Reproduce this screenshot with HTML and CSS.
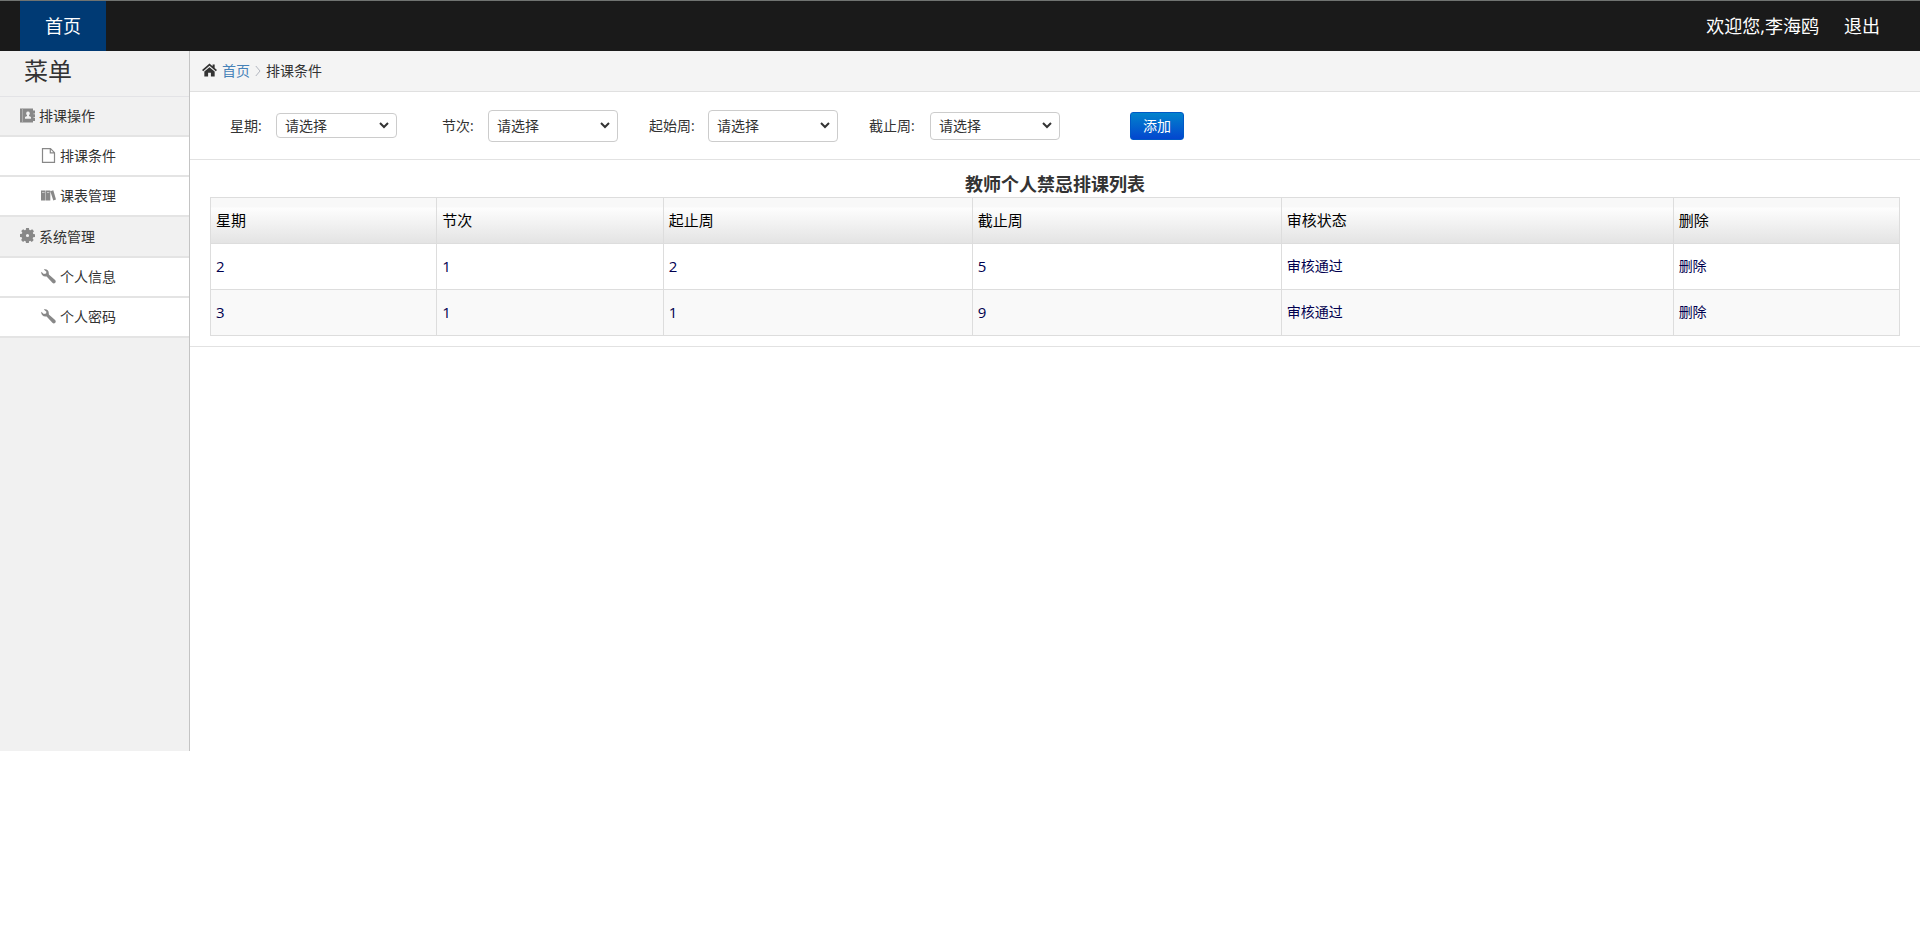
FILE: index.html
```
<!DOCTYPE html>
<html lang="zh-CN">
<head>
<meta charset="utf-8">
<title>排课条件</title>
<link rel="stylesheet" href="styles.css">
</head>
<body>
<svg class="defs" aria-hidden="true">
  <symbol id="wrench" viewBox="0 0 15 15"><path d="M2.800.6C5.400-.3 8 1.600 7.800 4.400c0 .7.100 1.200.6 1.600l5.700 5.100c1.900 1.900-.8 4.600-2.700 2.700L6.300 8.200c-.4-.5-.9-.6-1.600-.6C1.900 7.800-.3 5.400.3 2.700l2.500 2.200 2.300-.5.300-1.600z"/></symbol>
</svg>
<header class="topbar">
  <nav><a class="tab" href="#">首页</a></nav>
  <div class="user"><span>欢迎您,李海鸥</span><a href="#">退出</a></div>
</header>
<div class="layout">
  <aside class="sidebar">
    <h1 class="menu-title">菜单</h1>
    <section class="group">
      <h2 class="group-title"><svg class="icon" viewBox="0 0 15 15"><path fill-rule="evenodd" d="M0 .5h13v2h2v3h-1.500v.8H15v3h-1.500v.8H15v3h-2v1.400H0zM8 3.500a1.900 1.900 0 0 0-1 3.500v1l-2 1v1.800h6V9L9 8V7a1.900 1.900 0 0 0-1-3.500z"/><path d="M2.500.5v14" stroke="#b4b4b4" stroke-width=".8"/></svg>排课操作</h2>
      <a class="item" href="#"><svg class="icon" viewBox="0 0 15 15"><path d="M1.500.7h8l4 4v9.600h-12zM9.300.7v4.200h4.200" fill="none" stroke="currentColor" stroke-width="1.200"/></svg>排课条件</a>
      <a class="item" href="#"><svg class="icon" viewBox="0 0 15 15"><path d="M0 2.500h4.600v10H0zM5 2.500h4.300v10H5zM9.300 3.300l3-1L15 11.600l-2.700 1z"/><path d="M1 4.500h2.600M6 4.500h2.300" stroke="#c4c4c4"/></svg>课表管理</a>
    </section>
    <section class="group">
      <h2 class="group-title tall"><svg class="icon" viewBox="0 0 16 16"><path fill-rule="evenodd" d="M6.500 0h3l.4 2 1.300.5L13 1.400 14.900 3.400l-1.200 1.700.5 1.200 1.800.3v2.900l-2 .4-.5 1.200 1.100 1.700-2 2-1.700-1.100-1.200.5-.3 1.800h-3L6 14.100l-1.100-.5-1.700 1.200-2-2 1.100-1.800L1.800 9.900 0 9.500v-3l2-.3.5-1.200-1.200-1.700 2-2L5 2.500 6.100 2zM8 6.300a1.700 1.700 0 1 0 0 3.400 1.700 1.700 0 0 0 0-3.400z"/></svg>系统管理</h2>
      <a class="item" href="#"><svg class="icon"><use href="#wrench"/></svg>个人信息</a>
      <a class="item" href="#"><svg class="icon"><use href="#wrench"/></svg>个人密码</a>
    </section>
  </aside>
  <main class="content">
    <nav class="breadcrumb">
      <svg class="home" viewBox="0 0 16 14"><path d="M8 0 0 7l1.300 1.300L8 2.500l6.700 5.800L16 7l-2.500-2.200V1h-2.200v1.900zM8 4 2.500 8.700V14h4V9.800h3V14h4V8.700z"/></svg>
      <a href="#">首页</a>
      <svg class="sep" viewBox="0 0 6 12"><path d="M.8 1 5 6 .8 11" fill="none" stroke="#b2b6bf"/></svg>
      <span>排课条件</span>
    </nav>
    <form class="filters">
      <div class="field f-day"><label for="day">星期:</label><select id="day"><option>请选择</option></select></div>
      <div class="field f-period"><label for="period">节次:</label><select id="period"><option>请选择</option></select></div>
      <div class="field f-start"><label for="start">起始周:</label><select id="start"><option>请选择</option></select></div>
      <div class="field f-end"><label for="end">截止周:</label><select id="end"><option>请选择</option></select></div>
      <button class="add" type="button">添加</button>
    </form>
    <section class="list">
      <table>
        <caption>教师个人禁忌排课列表</caption>
        <colgroup><col class="c-narrow"><col class="c-narrow"><col class="c-mid"><col class="c-mid"><col class="c-wide"><col class="c-narrow"></colgroup>
        <thead><tr><th>星期</th><th>节次</th><th>起止周</th><th>截止周</th><th>审核状态</th><th>删除</th></tr></thead>
        <tbody>
          <tr><td class="num">2</td><td class="num">1</td><td class="num">2</td><td class="num">5</td><td>审核通过</td><td><a href="#">删除</a></td></tr>
          <tr><td class="num">3</td><td class="num">1</td><td class="num">1</td><td class="num">9</td><td>审核通过</td><td><a href="#">删除</a></td></tr>
        </tbody>
      </table>
    </section>
  </main>
</div>
</body>
</html>
```
FILE: styles.css
```
* { box-sizing: border-box; }
body {
  margin: 0;
  background: #fff;
  color: #333;
  font: 14px/20px "Open Sans", "Noto Sans CJK SC", sans-serif;
}
a { color: inherit; text-decoration: none; }
.defs { display: none; }

.topbar {
  display: flex;
  justify-content: space-between;
  padding: 0 40px 0 20px;
  border-top: 1px solid #707371;
  background: #1a1a1a;
  color: #fff;
  font-size: 18px;
  line-height: 50px;
}
.tab { display: block; padding: 0 25px; background: #003a74; }
.user { display: flex; gap: 25px; }

.layout { display: flex; align-items: flex-start; }
.sidebar {
  flex: none;
  width: 190px;
  min-height: 700px;
  border-right: 1px solid #c4c4c4;
  background: #f1f1f1;
}
.menu-title {
  margin: 0;
  padding: 0 24px 5px;
  border-bottom: 1px solid #e3e3e6;
  font-size: 24px;
  font-weight: 400;
  line-height: 40px;
}
.group-title, .item {
  display: flex;
  align-items: center;
  gap: 4px;
  height: 40px;
  margin: 0;
  border-bottom: 2px solid #e4e4e4;
  font-size: 14px;
  font-weight: 400;
}
.group-title { padding-left: 20px; }
.tall { height: 41px; }
.item { padding-left: 41px; background: #fff; }
.icon { width: 15px; height: 15px; margin-bottom: 2px; color: #888; fill: #888; }

.content { flex: 1; min-width: 0; }
.breadcrumb {
  display: flex;
  align-items: center;
  gap: 5px;
  height: 41px;
  padding-left: 12px;
  border-bottom: 1px solid #e0e0e0;
  background: #f4f4f4;
}
.breadcrumb a { color: #4682b8; }
.home { width: 15px; height: 14px; margin-bottom: 2px; fill: #333; }
.sep { width: 6px; height: 12px; }

.filters {
  display: flex;
  align-items: center;
  height: 68px;
  padding-left: 40px;
  border-bottom: 1px solid #e2e2e2;
}
.field { display: flex; align-items: center; justify-content: space-between; }
.f-day { width: 167px; margin-right: 45px; }
.f-period { width: 176px; margin-right: 31px; }
.f-start { width: 189px; margin-right: 31px; }
.f-end { width: 191px; margin-right: 70px; }
select {
  appearance: none;
  width: 130px;
  height: 32px;
  padding: 0 8px;
  border: 1px solid #ccc;
  border-radius: 4px;
  background: #fff url("data:image/svg+xml,%3Csvg xmlns='http://www.w3.org/2000/svg' width='10' height='7'%3E%3Cpath d='M1 1l4 4 4-4' fill='none' stroke='%23333' stroke-width='2'/%3E%3C/svg%3E") no-repeat right 7px center;
  color: #333;
  font: inherit;
}
.f-day select { width: 121px; height: 25px; }
.f-end select { height: 28px; }
.add {
  width: 54px;
  height: 28px;
  padding: 0;
  border: 1px solid #0059c6;
  border-radius: 3px;
  background: linear-gradient(#0283cc, #0346cf);
  color: #fff;
  font: inherit;
}

.list { padding: 12px 20px 10px; border-bottom: 1px solid #e2e2e2; }
table {
  width: 100%;
  border-collapse: collapse;
  table-layout: fixed;
}
caption { font-size: 18px; font-weight: 700; line-height: 25px; }
.c-narrow { width: 134px; }
.c-mid { width: 183px; }
.c-wide { width: 232px; }
th, td {
  height: 46px;
  padding: 0 5px 2px;
  border: 1px solid #ddd;
  text-align: left;
}
th { color: #000; font-size: 15px; font-weight: 400; }
thead tr { background: linear-gradient(#f8f8f8 0, #f8f8f8 9px, #fdfdfd 10px, #e3e3e3); }
td { color: #00004f; }
.num { font-size: 15px; }
tbody tr:nth-child(even) { background: #f9f9f9; }
```
